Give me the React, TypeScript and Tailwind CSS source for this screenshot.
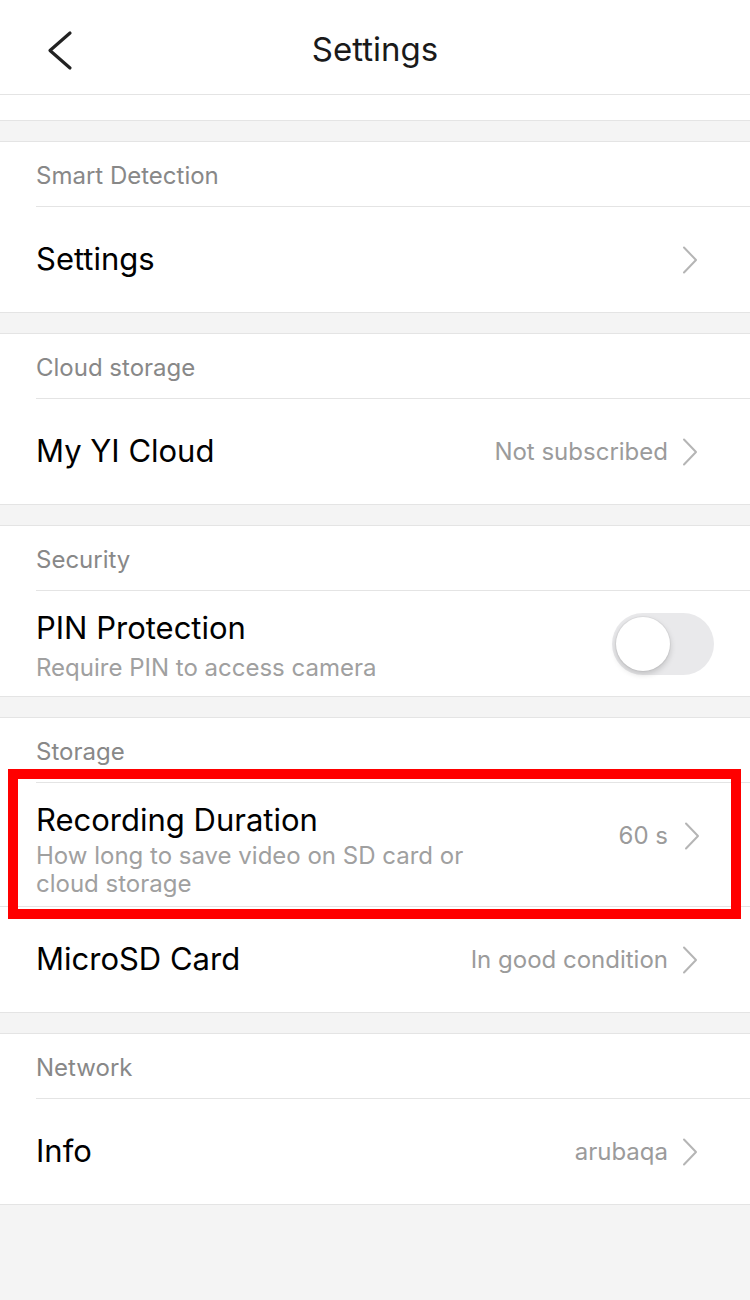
import React from "react";

function Chevron() {
  return (
    <svg width="16" height="28" viewBox="0 0 16 28" fill="none" className="shrink-0">
      <path d="M2 1.5 L14 14 L2 26.5" stroke="#b5b5b5" strokeWidth="2" strokeLinecap="round" strokeLinejoin="round" />
    </svg>
  );
}

function Section({ label, children }: { label: string; children: React.ReactNode }) {
  return (
    <div className="bg-white border-y border-[#e4e4e4]">
      <div className="pl-[36px]">
        <div className="h-[65px] flex items-center pt-[3px] border-b border-[#e4e4e4]">
          <span className="text-[24px] text-[#888888]">{label}</span>
        </div>
      </div>
      {children}
    </div>
  );
}

function LinkRow({ title, value }: { title: string; value?: string }) {
  return (
    <div className="h-[105px] flex items-center justify-between pl-[36px] pr-[52px]">
      <span className="text-[31px] text-black">{title}</span>
      <div className="flex items-center gap-[14px]">
        {value && <span className="text-[24px] text-[#9b9b9b]">{value}</span>}
        <Chevron />
      </div>
    </div>
  );
}

export default function App() {
  const font = { fontFamily: "Inter, 'Liberation Sans', sans-serif" };
  return (
    <div className="w-[750px] min-h-[1300px] bg-[#f4f4f4]" style={font}>
      {/* Nav bar */}
      <div className="h-[95px] bg-white border-b border-[#e4e4e4] relative flex items-center justify-center">
        <svg width="28" height="42" viewBox="0 0 28 42" fill="none" className="absolute left-[46px] top-[30px]">
          <path d="M24 3 L4 20.5 L24 38" stroke="#222222" strokeWidth="3.2" strokeLinecap="round" strokeLinejoin="round" />
        </svg>
        <span className="text-[33px] text-[#1a1a1a] mt-[6px]">Settings</span>
      </div>
      <div className="h-[26px] bg-white border-b border-[#e4e4e4]" />
      <div className="h-[20px]" />

      <Section label="Smart Detection">
        <LinkRow title="Settings" />
      </Section>
      <div className="h-[20px]" />

      <Section label="Cloud storage">
        <LinkRow title="My YI Cloud" value="Not subscribed" />
      </Section>
      <div className="h-[20px]" />

      <Section label="Security">
        <div className="h-[105px] flex items-center justify-between pl-[36px] pr-[36px]">
          <div className="flex flex-col self-start pt-[19px]">
            <span className="text-[31px] leading-[36px] text-black">PIN Protection</span>
            <span className="text-[24px] leading-[30px] text-[#a0a0a0] mt-[7px]">Require PIN to access camera</span>
          </div>
          <div className="w-[102px] h-[62px] rounded-full bg-[#e9e9eb] p-[4px] flex items-center">
            <div className="w-[54px] h-[54px] rounded-full bg-white shadow-[0_3px_6px_rgba(0,0,0,0.18),0_0_0_1px_rgba(0,0,0,0.04)]" />
          </div>
        </div>
      </Section>
      <div className="h-[20px]" />

      <Section label="Storage">
        <div className="relative">
          <div className="h-[124px] flex justify-between pl-[36px] pr-[50px] pt-[19px] border-b border-[#e4e4e4]">
            <div className="flex flex-col">
              <span className="text-[31px] leading-[36px] text-black">Recording Duration</span>
              <span className="text-[24px] leading-[28px] text-[#a0a0a0] mt-[4px] w-[440px]">
                How long to save video on SD card or cloud storage
              </span>
            </div>
            <div className="flex items-center gap-[16px] self-start mt-[19px] h-[30px]">
              <span className="text-[24px] text-[#9b9b9b]">60 s</span>
              <Chevron />
            </div>
          </div>
          <div className="absolute left-[8px] right-[9px] top-[-14px] bottom-[-12px] border-[10px] border-[#ff0000] pointer-events-none" />
        </div>
        <LinkRow title="MicroSD Card" value="In good condition" />
      </Section>
      <div className="h-[20px]" />

      <Section label="Network">
        <LinkRow title="Info" value="arubaqa" />
      </Section>
    </div>
  );
}
